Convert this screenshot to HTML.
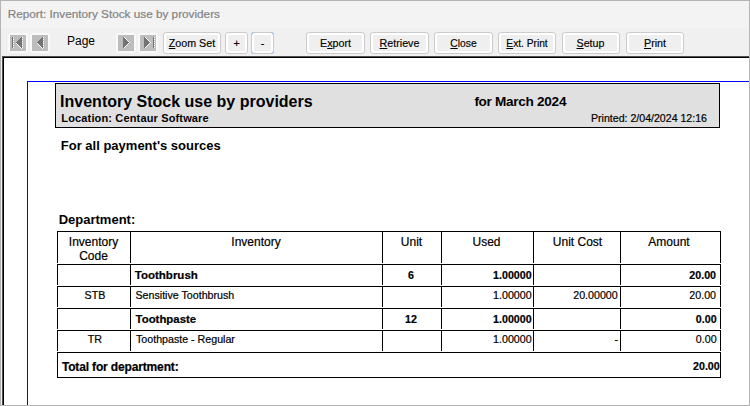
<!DOCTYPE html>
<html><head><meta charset="utf-8"><style>
html,body{margin:0;padding:0}
body{width:750px;height:406px;position:relative;overflow:hidden;background:#f0f0f0;font-family:"Liberation Sans",sans-serif}
.t{position:absolute;white-space:nowrap;-webkit-text-stroke:0.2px currentColor}
.r{position:absolute}
.btn{position:absolute;top:32px;height:20px;border:1px solid #cbcbcb;border-radius:3px;background:#fff}
.btn .in{position:absolute;left:2px;top:2px;right:2px;bottom:2px;background:#efefef;border-radius:1px}
.bl{position:absolute;top:35.9px;height:14px;line-height:14px;font-size:10.7px;text-align:center;color:#000;white-space:nowrap;-webkit-text-stroke:0.15px #000}
.bl u{text-decoration:underline;text-underline-offset:1px}
</style></head><body>
<div class="r" style="left:0px;top:0px;width:750px;height:28px;background:#f3f3f3;"></div>
<div class="r" style="left:0px;top:0px;width:750px;height:1px;background:#b4b4b4;"></div>
<div class="r" style="left:0px;top:0px;width:1px;height:406px;background:#b4b4b4;"></div>
<div class="r" style="left:749px;top:0px;width:1px;height:406px;background:#b4b4b4;"></div>
<div class="r" style="left:0px;top:405px;width:750px;height:1px;background:#b4b4b4;"></div>
<div class="t" style="left:7.7px;top:7.65px;font-size:11.75px;line-height:11.75px;font-weight:400;color:#828282;">Report: Inventory Stock use by providers</div>
<div class="r" style="left:8px;top:33px;width:16px;height:16px;border:2px solid #fafafa;border-radius:4px"></div><svg class="r" style="left:10px;top:35px" width="16" height="16" shape-rendering="crispEdges"><rect width="16" height="16" fill="#bdbdbd"/><rect x="2" y="2" width="1" height="1" fill="#737373"/><rect x="3" y="2" width="1" height="1" fill="#ffffff"/><rect x="2" y="3" width="1" height="1" fill="#737373"/><rect x="2" y="4" width="1" height="1" fill="#737373"/><rect x="3" y="4" width="1" height="1" fill="#ffffff"/><rect x="2" y="5" width="1" height="1" fill="#737373"/><rect x="2" y="6" width="1" height="1" fill="#737373"/><rect x="3" y="6" width="1" height="1" fill="#ffffff"/><rect x="2" y="7" width="1" height="1" fill="#737373"/><rect x="2" y="8" width="1" height="1" fill="#737373"/><rect x="3" y="8" width="1" height="1" fill="#ffffff"/><rect x="2" y="9" width="1" height="1" fill="#737373"/><rect x="2" y="10" width="1" height="1" fill="#737373"/><rect x="3" y="10" width="1" height="1" fill="#ffffff"/><rect x="2" y="11" width="1" height="1" fill="#737373"/><rect x="2" y="12" width="1" height="1" fill="#737373"/><rect x="3" y="12" width="1" height="1" fill="#ffffff"/><rect x="11" y="2" width="1" height="1" fill="#737373"/><rect x="12" y="2" width="1" height="1" fill="#ffffff"/><rect x="10" y="3" width="1" height="1" fill="#737373"/><rect x="11" y="3" width="1" height="1" fill="#737373"/><rect x="9" y="4" width="1" height="1" fill="#737373"/><rect x="10" y="4" width="1" height="1" fill="#737373"/><rect x="11" y="4" width="1" height="1" fill="#737373"/><rect x="12" y="4" width="1" height="1" fill="#ffffff"/><rect x="8" y="5" width="1" height="1" fill="#737373"/><rect x="9" y="5" width="1" height="1" fill="#737373"/><rect x="10" y="5" width="1" height="1" fill="#737373"/><rect x="11" y="5" width="1" height="1" fill="#737373"/><rect x="7" y="6" width="1" height="1" fill="#737373"/><rect x="8" y="6" width="1" height="1" fill="#737373"/><rect x="9" y="6" width="1" height="1" fill="#737373"/><rect x="10" y="6" width="1" height="1" fill="#737373"/><rect x="11" y="6" width="1" height="1" fill="#737373"/><rect x="12" y="6" width="1" height="1" fill="#ffffff"/><rect x="6" y="7" width="1" height="1" fill="#737373"/><rect x="7" y="7" width="1" height="1" fill="#737373"/><rect x="8" y="7" width="1" height="1" fill="#737373"/><rect x="9" y="7" width="1" height="1" fill="#737373"/><rect x="10" y="7" width="1" height="1" fill="#737373"/><rect x="11" y="7" width="1" height="1" fill="#737373"/><rect x="7" y="8" width="1" height="1" fill="#737373"/><rect x="8" y="8" width="1" height="1" fill="#737373"/><rect x="9" y="8" width="1" height="1" fill="#737373"/><rect x="10" y="8" width="1" height="1" fill="#737373"/><rect x="11" y="8" width="1" height="1" fill="#737373"/><rect x="6" y="8" width="1" height="1" fill="#ffffff"/><rect x="12" y="8" width="1" height="1" fill="#ffffff"/><rect x="8" y="9" width="1" height="1" fill="#737373"/><rect x="9" y="9" width="1" height="1" fill="#737373"/><rect x="10" y="9" width="1" height="1" fill="#737373"/><rect x="11" y="9" width="1" height="1" fill="#737373"/><rect x="7" y="9" width="1" height="1" fill="#ffffff"/><rect x="9" y="10" width="1" height="1" fill="#737373"/><rect x="10" y="10" width="1" height="1" fill="#737373"/><rect x="11" y="10" width="1" height="1" fill="#737373"/><rect x="8" y="10" width="1" height="1" fill="#ffffff"/><rect x="12" y="10" width="1" height="1" fill="#ffffff"/><rect x="10" y="11" width="1" height="1" fill="#737373"/><rect x="11" y="11" width="1" height="1" fill="#737373"/><rect x="9" y="11" width="1" height="1" fill="#ffffff"/><rect x="11" y="12" width="1" height="1" fill="#737373"/><rect x="10" y="12" width="1" height="1" fill="#ffffff"/><rect x="12" y="12" width="1" height="1" fill="#ffffff"/><rect x="11" y="13" width="1" height="1" fill="#ffffff"/></svg>
<div class="r" style="left:30px;top:33px;width:16px;height:16px;border:2px solid #fafafa;border-radius:4px"></div><svg class="r" style="left:32px;top:35px" width="16" height="16" shape-rendering="crispEdges"><rect width="16" height="16" fill="#bdbdbd"/><rect x="10" y="2" width="1" height="1" fill="#737373"/><rect x="11" y="2" width="1" height="1" fill="#ffffff"/><rect x="9" y="3" width="1" height="1" fill="#737373"/><rect x="10" y="3" width="1" height="1" fill="#737373"/><rect x="8" y="4" width="1" height="1" fill="#737373"/><rect x="9" y="4" width="1" height="1" fill="#737373"/><rect x="10" y="4" width="1" height="1" fill="#737373"/><rect x="11" y="4" width="1" height="1" fill="#ffffff"/><rect x="7" y="5" width="1" height="1" fill="#737373"/><rect x="8" y="5" width="1" height="1" fill="#737373"/><rect x="9" y="5" width="1" height="1" fill="#737373"/><rect x="10" y="5" width="1" height="1" fill="#737373"/><rect x="6" y="6" width="1" height="1" fill="#737373"/><rect x="7" y="6" width="1" height="1" fill="#737373"/><rect x="8" y="6" width="1" height="1" fill="#737373"/><rect x="9" y="6" width="1" height="1" fill="#737373"/><rect x="10" y="6" width="1" height="1" fill="#737373"/><rect x="11" y="6" width="1" height="1" fill="#ffffff"/><rect x="5" y="7" width="1" height="1" fill="#737373"/><rect x="6" y="7" width="1" height="1" fill="#737373"/><rect x="7" y="7" width="1" height="1" fill="#737373"/><rect x="8" y="7" width="1" height="1" fill="#737373"/><rect x="9" y="7" width="1" height="1" fill="#737373"/><rect x="10" y="7" width="1" height="1" fill="#737373"/><rect x="6" y="8" width="1" height="1" fill="#737373"/><rect x="7" y="8" width="1" height="1" fill="#737373"/><rect x="8" y="8" width="1" height="1" fill="#737373"/><rect x="9" y="8" width="1" height="1" fill="#737373"/><rect x="10" y="8" width="1" height="1" fill="#737373"/><rect x="5" y="8" width="1" height="1" fill="#ffffff"/><rect x="11" y="8" width="1" height="1" fill="#ffffff"/><rect x="7" y="9" width="1" height="1" fill="#737373"/><rect x="8" y="9" width="1" height="1" fill="#737373"/><rect x="9" y="9" width="1" height="1" fill="#737373"/><rect x="10" y="9" width="1" height="1" fill="#737373"/><rect x="6" y="9" width="1" height="1" fill="#ffffff"/><rect x="8" y="10" width="1" height="1" fill="#737373"/><rect x="9" y="10" width="1" height="1" fill="#737373"/><rect x="10" y="10" width="1" height="1" fill="#737373"/><rect x="7" y="10" width="1" height="1" fill="#ffffff"/><rect x="11" y="10" width="1" height="1" fill="#ffffff"/><rect x="9" y="11" width="1" height="1" fill="#737373"/><rect x="10" y="11" width="1" height="1" fill="#737373"/><rect x="8" y="11" width="1" height="1" fill="#ffffff"/><rect x="10" y="12" width="1" height="1" fill="#737373"/><rect x="9" y="12" width="1" height="1" fill="#ffffff"/><rect x="11" y="12" width="1" height="1" fill="#ffffff"/><rect x="10" y="13" width="1" height="1" fill="#ffffff"/></svg>
<div class="r" style="left:116px;top:33px;width:16px;height:16px;border:2px solid #fafafa;border-radius:4px"></div><svg class="r" style="left:118px;top:35px" width="16" height="16" shape-rendering="crispEdges"><rect width="16" height="16" fill="#bdbdbd"/><rect x="5" y="2" width="1" height="1" fill="#737373"/><rect x="6" y="2" width="1" height="1" fill="#ffffff"/><rect x="5" y="3" width="1" height="1" fill="#737373"/><rect x="6" y="3" width="1" height="1" fill="#737373"/><rect x="7" y="3" width="1" height="1" fill="#ffffff"/><rect x="5" y="4" width="1" height="1" fill="#737373"/><rect x="6" y="4" width="1" height="1" fill="#737373"/><rect x="7" y="4" width="1" height="1" fill="#737373"/><rect x="8" y="4" width="1" height="1" fill="#ffffff"/><rect x="5" y="5" width="1" height="1" fill="#737373"/><rect x="6" y="5" width="1" height="1" fill="#737373"/><rect x="7" y="5" width="1" height="1" fill="#737373"/><rect x="8" y="5" width="1" height="1" fill="#737373"/><rect x="9" y="5" width="1" height="1" fill="#ffffff"/><rect x="5" y="6" width="1" height="1" fill="#737373"/><rect x="6" y="6" width="1" height="1" fill="#737373"/><rect x="7" y="6" width="1" height="1" fill="#737373"/><rect x="8" y="6" width="1" height="1" fill="#737373"/><rect x="9" y="6" width="1" height="1" fill="#737373"/><rect x="10" y="6" width="1" height="1" fill="#ffffff"/><rect x="5" y="7" width="1" height="1" fill="#737373"/><rect x="6" y="7" width="1" height="1" fill="#737373"/><rect x="7" y="7" width="1" height="1" fill="#737373"/><rect x="8" y="7" width="1" height="1" fill="#737373"/><rect x="9" y="7" width="1" height="1" fill="#737373"/><rect x="10" y="7" width="1" height="1" fill="#737373"/><rect x="11" y="7" width="1" height="1" fill="#ffffff"/><rect x="5" y="8" width="1" height="1" fill="#737373"/><rect x="6" y="8" width="1" height="1" fill="#737373"/><rect x="7" y="8" width="1" height="1" fill="#737373"/><rect x="8" y="8" width="1" height="1" fill="#737373"/><rect x="9" y="8" width="1" height="1" fill="#737373"/><rect x="10" y="8" width="1" height="1" fill="#ffffff"/><rect x="5" y="9" width="1" height="1" fill="#737373"/><rect x="6" y="9" width="1" height="1" fill="#737373"/><rect x="7" y="9" width="1" height="1" fill="#737373"/><rect x="8" y="9" width="1" height="1" fill="#737373"/><rect x="9" y="9" width="1" height="1" fill="#ffffff"/><rect x="5" y="10" width="1" height="1" fill="#737373"/><rect x="6" y="10" width="1" height="1" fill="#737373"/><rect x="7" y="10" width="1" height="1" fill="#737373"/><rect x="8" y="10" width="1" height="1" fill="#ffffff"/><rect x="5" y="11" width="1" height="1" fill="#737373"/><rect x="6" y="11" width="1" height="1" fill="#737373"/><rect x="7" y="11" width="1" height="1" fill="#ffffff"/><rect x="5" y="12" width="1" height="1" fill="#737373"/><rect x="6" y="12" width="1" height="1" fill="#ffffff"/></svg>
<div class="r" style="left:138px;top:33px;width:16px;height:16px;border:2px solid #fafafa;border-radius:4px"></div><svg class="r" style="left:140px;top:35px" width="16" height="16" shape-rendering="crispEdges"><rect width="16" height="16" fill="#bdbdbd"/><rect x="4" y="2" width="1" height="1" fill="#737373"/><rect x="5" y="2" width="1" height="1" fill="#ffffff"/><rect x="13" y="2" width="1" height="1" fill="#737373"/><rect x="14" y="2" width="1" height="1" fill="#ffffff"/><rect x="4" y="3" width="1" height="1" fill="#737373"/><rect x="5" y="3" width="1" height="1" fill="#737373"/><rect x="6" y="3" width="1" height="1" fill="#ffffff"/><rect x="13" y="3" width="1" height="1" fill="#737373"/><rect x="4" y="4" width="1" height="1" fill="#737373"/><rect x="5" y="4" width="1" height="1" fill="#737373"/><rect x="6" y="4" width="1" height="1" fill="#737373"/><rect x="7" y="4" width="1" height="1" fill="#ffffff"/><rect x="13" y="4" width="1" height="1" fill="#737373"/><rect x="14" y="4" width="1" height="1" fill="#ffffff"/><rect x="4" y="5" width="1" height="1" fill="#737373"/><rect x="5" y="5" width="1" height="1" fill="#737373"/><rect x="6" y="5" width="1" height="1" fill="#737373"/><rect x="7" y="5" width="1" height="1" fill="#737373"/><rect x="8" y="5" width="1" height="1" fill="#ffffff"/><rect x="13" y="5" width="1" height="1" fill="#737373"/><rect x="4" y="6" width="1" height="1" fill="#737373"/><rect x="5" y="6" width="1" height="1" fill="#737373"/><rect x="6" y="6" width="1" height="1" fill="#737373"/><rect x="7" y="6" width="1" height="1" fill="#737373"/><rect x="8" y="6" width="1" height="1" fill="#737373"/><rect x="9" y="6" width="1" height="1" fill="#ffffff"/><rect x="13" y="6" width="1" height="1" fill="#737373"/><rect x="14" y="6" width="1" height="1" fill="#ffffff"/><rect x="4" y="7" width="1" height="1" fill="#737373"/><rect x="5" y="7" width="1" height="1" fill="#737373"/><rect x="6" y="7" width="1" height="1" fill="#737373"/><rect x="7" y="7" width="1" height="1" fill="#737373"/><rect x="8" y="7" width="1" height="1" fill="#737373"/><rect x="9" y="7" width="1" height="1" fill="#737373"/><rect x="10" y="7" width="1" height="1" fill="#ffffff"/><rect x="13" y="7" width="1" height="1" fill="#737373"/><rect x="4" y="8" width="1" height="1" fill="#737373"/><rect x="5" y="8" width="1" height="1" fill="#737373"/><rect x="6" y="8" width="1" height="1" fill="#737373"/><rect x="7" y="8" width="1" height="1" fill="#737373"/><rect x="8" y="8" width="1" height="1" fill="#737373"/><rect x="9" y="8" width="1" height="1" fill="#ffffff"/><rect x="13" y="8" width="1" height="1" fill="#737373"/><rect x="14" y="8" width="1" height="1" fill="#ffffff"/><rect x="4" y="9" width="1" height="1" fill="#737373"/><rect x="5" y="9" width="1" height="1" fill="#737373"/><rect x="6" y="9" width="1" height="1" fill="#737373"/><rect x="7" y="9" width="1" height="1" fill="#737373"/><rect x="8" y="9" width="1" height="1" fill="#ffffff"/><rect x="13" y="9" width="1" height="1" fill="#737373"/><rect x="4" y="10" width="1" height="1" fill="#737373"/><rect x="5" y="10" width="1" height="1" fill="#737373"/><rect x="6" y="10" width="1" height="1" fill="#737373"/><rect x="7" y="10" width="1" height="1" fill="#ffffff"/><rect x="13" y="10" width="1" height="1" fill="#737373"/><rect x="14" y="10" width="1" height="1" fill="#ffffff"/><rect x="4" y="11" width="1" height="1" fill="#737373"/><rect x="5" y="11" width="1" height="1" fill="#737373"/><rect x="6" y="11" width="1" height="1" fill="#ffffff"/><rect x="13" y="11" width="1" height="1" fill="#737373"/><rect x="4" y="12" width="1" height="1" fill="#737373"/><rect x="5" y="12" width="1" height="1" fill="#ffffff"/><rect x="13" y="12" width="1" height="1" fill="#737373"/><rect x="14" y="12" width="1" height="1" fill="#ffffff"/></svg>
<div class="t" style="left:67px;top:34.64px;font-size:12px;line-height:12px;font-weight:400;color:#000;-webkit-text-stroke:0;">Page</div>
<div class="btn" style="left:163px;width:56px;border-color:#cbcbcb"><div class="in"></div></div>
<div class="bl" style="left:163px;width:58px;"><u>Z</u>oom Set</div>
<div class="btn" style="left:225px;width:21px;border-color:#cbcbcb"><div class="in"></div></div>
<div class="bl" style="left:225px;width:23px;">+</div>
<div class="btn" style="left:251px;width:21px;border-color:#cbcbcb"><div class="in"></div></div>
<div class="bl" style="left:251px;width:23px;">-</div>
<div class="btn" style="left:306px;width:57px;border-color:#cbcbcb"><div class="in"></div></div>
<div class="bl" style="left:306px;width:59px;">E<u>x</u>port</div>
<div class="btn" style="left:370px;width:57px;border-color:#cbcbcb"><div class="in"></div></div>
<div class="bl" style="left:370px;width:59px;"><u>R</u>etrieve</div>
<div class="btn" style="left:434px;width:57px;border-color:#cbcbcb"><div class="in"></div></div>
<div class="bl" style="left:434px;width:59px;font-size:10.3px;top:36.6px;"><u>C</u>lose</div>
<div class="btn" style="left:498px;width:56px;border-color:#cbcbcb"><div class="in"></div></div>
<div class="bl" style="left:498px;width:58px;font-size:10.2px;top:36.6px;"><u>E</u>xt. Print</div>
<div class="btn" style="left:562px;width:56px;border-color:#cbcbcb"><div class="in"></div></div>
<div class="bl" style="left:562px;width:58px;text-indent:-1px;"><u>S</u>etup</div>
<div class="btn" style="left:626px;width:56px;border-color:#cbcbcb"><div class="in"></div></div>
<div class="bl" style="left:626px;width:58px;"><u>P</u>rint</div>
<div class="r" style="left:251px;top:32px;width:2px;height:2px;border-top:1px solid #a6c6e6;border-left:1px solid #a6c6e6;border-top-left-radius:3px"></div>
<div class="r" style="left:271px;top:32px;width:2px;height:2px;border-top:1px solid #a6c6e6;border-right:1px solid #a6c6e6;border-top-right-radius:3px"></div>
<div class="r" style="left:251px;top:51px;width:2px;height:2px;border-bottom:1px solid #a6c6e6;border-left:1px solid #a6c6e6;border-bottom-left-radius:3px"></div>
<div class="r" style="left:271px;top:51px;width:2px;height:2px;border-bottom:1px solid #a6c6e6;border-right:1px solid #a6c6e6;border-bottom-right-radius:3px"></div>
<div class="r" style="left:2px;top:56px;width:747px;height:1px;background:#505050;"></div>
<div class="r" style="left:2px;top:56px;width:1px;height:349px;background:#505050;"></div>
<div class="r" style="left:3px;top:57px;width:746px;height:1px;background:#000;"></div>
<div class="r" style="left:3px;top:57px;width:1px;height:348px;background:#000;"></div>
<div class="r" style="left:4px;top:58px;width:745px;height:347px;background:#fff;"></div>
<div class="r" style="left:27px;top:81px;width:722px;height:1px;background:#0000ff;"></div>
<div class="r" style="left:27px;top:81px;width:1px;height:324px;background:#0000ff;"></div>
<div class="r" style="left:55px;top:83px;width:665px;height:45px;background:#e0e0e0;border:1px solid #000;box-sizing:border-box"></div>
<div class="t" style="left:60.1px;top:93.76px;font-size:16px;line-height:16px;font-weight:700;color:#000;-webkit-text-stroke:0;">Inventory Stock use by providers</div>
<div class="t" style="left:474.4px;top:95.19px;font-size:13.6px;line-height:13.6px;font-weight:700;color:#000;letter-spacing:-0.3px;-webkit-text-stroke:0;">for March 2024</div>
<div class="t" style="left:61.3px;top:112.99px;font-size:11px;line-height:11px;font-weight:700;color:#000;letter-spacing:0.15px;-webkit-text-stroke:0;">Location: Centaur Software</div>
<div class="t" style="right:43px;top:112.63px;font-size:10.6px;line-height:10.6px;font-weight:400;color:#000;">Printed: 2/04/2024 12:16</div>
<div class="t" style="left:60.8px;top:138.70px;font-size:13px;line-height:13px;font-weight:700;color:#000;-webkit-text-stroke:0;">For all payment's sources</div>
<div class="t" style="left:58.7px;top:212.70px;font-size:13px;line-height:13px;font-weight:700;color:#000;-webkit-text-stroke:0;">Department:</div>
<div class="r" style="left:57px;top:231px;width:664px;height:1px;background:#000;"></div><div class="r" style="left:57px;top:231px;width:1px;height:32px;background:#000;"></div><div class="r" style="left:130px;top:231px;width:1px;height:32px;background:#000;"></div><div class="r" style="left:382px;top:231px;width:1px;height:32px;background:#000;"></div><div class="r" style="left:441px;top:231px;width:1px;height:32px;background:#000;"></div><div class="r" style="left:533px;top:231px;width:1px;height:32px;background:#000;"></div><div class="r" style="left:620px;top:231px;width:1px;height:32px;background:#000;"></div><div class="r" style="left:720px;top:231px;width:1px;height:32px;background:#000;"></div>
<div class="r" style="left:57px;top:264px;width:664px;height:1px;background:#000;"></div><div class="r" style="left:57px;top:264px;width:1px;height:21px;background:#000;"></div><div class="r" style="left:130px;top:264px;width:1px;height:21px;background:#000;"></div><div class="r" style="left:382px;top:264px;width:1px;height:21px;background:#000;"></div><div class="r" style="left:441px;top:264px;width:1px;height:21px;background:#000;"></div><div class="r" style="left:533px;top:264px;width:1px;height:21px;background:#000;"></div><div class="r" style="left:620px;top:264px;width:1px;height:21px;background:#000;"></div><div class="r" style="left:720px;top:264px;width:1px;height:21px;background:#000;"></div>
<div class="r" style="left:57px;top:286px;width:664px;height:1px;background:#000;"></div><div class="r" style="left:57px;top:286px;width:1px;height:21px;background:#000;"></div><div class="r" style="left:130px;top:286px;width:1px;height:21px;background:#000;"></div><div class="r" style="left:382px;top:286px;width:1px;height:21px;background:#000;"></div><div class="r" style="left:441px;top:286px;width:1px;height:21px;background:#000;"></div><div class="r" style="left:533px;top:286px;width:1px;height:21px;background:#000;"></div><div class="r" style="left:620px;top:286px;width:1px;height:21px;background:#000;"></div><div class="r" style="left:720px;top:286px;width:1px;height:21px;background:#000;"></div>
<div class="r" style="left:57px;top:308px;width:664px;height:1px;background:#000;"></div><div class="r" style="left:57px;top:308px;width:1px;height:21px;background:#000;"></div><div class="r" style="left:130px;top:308px;width:1px;height:21px;background:#000;"></div><div class="r" style="left:382px;top:308px;width:1px;height:21px;background:#000;"></div><div class="r" style="left:441px;top:308px;width:1px;height:21px;background:#000;"></div><div class="r" style="left:533px;top:308px;width:1px;height:21px;background:#000;"></div><div class="r" style="left:620px;top:308px;width:1px;height:21px;background:#000;"></div><div class="r" style="left:720px;top:308px;width:1px;height:21px;background:#000;"></div>
<div class="r" style="left:57px;top:330px;width:664px;height:1px;background:#000;"></div><div class="r" style="left:57px;top:330px;width:1px;height:21px;background:#000;"></div><div class="r" style="left:130px;top:330px;width:1px;height:21px;background:#000;"></div><div class="r" style="left:382px;top:330px;width:1px;height:21px;background:#000;"></div><div class="r" style="left:441px;top:330px;width:1px;height:21px;background:#000;"></div><div class="r" style="left:533px;top:330px;width:1px;height:21px;background:#000;"></div><div class="r" style="left:620px;top:330px;width:1px;height:21px;background:#000;"></div><div class="r" style="left:720px;top:330px;width:1px;height:21px;background:#000;"></div>
<div class="r" style="left:57px;top:352px;width:664px;height:1px;background:#000;"></div><div class="r" style="left:57px;top:352px;width:1px;height:26px;background:#000;"></div><div class="r" style="left:720px;top:352px;width:1px;height:26px;background:#000;"></div><div class="r" style="left:57px;top:377px;width:664px;height:1px;background:#000;"></div>
<div class="t" style="left:-106.5px;width:400px;text-align:center;top:235.84px;font-size:12px;line-height:12px;font-weight:400;color:#000;">Inventory</div>
<div class="t" style="left:-106.5px;width:400px;text-align:center;top:249.84px;font-size:12px;line-height:12px;font-weight:400;color:#000;">Code</div>
<div class="t" style="left:56px;width:400px;text-align:center;top:235.84px;font-size:12px;line-height:12px;font-weight:400;color:#000;">Inventory</div>
<div class="t" style="left:211.5px;width:400px;text-align:center;top:235.54px;font-size:12px;line-height:12px;font-weight:400;color:#000;">Unit</div>
<div class="t" style="left:286.5px;width:400px;text-align:center;top:235.54px;font-size:12px;line-height:12px;font-weight:400;color:#000;">Used</div>
<div class="t" style="left:377.5px;width:400px;text-align:center;top:235.54px;font-size:12px;line-height:12px;font-weight:400;color:#000;">Unit Cost</div>
<div class="t" style="left:469px;width:400px;text-align:center;top:235.54px;font-size:12px;line-height:12px;font-weight:400;color:#000;">Amount</div>
<div class="t" style="left:134.8px;top:269.87px;font-size:11.5px;line-height:11.5px;font-weight:700;color:#000;">Toothbrush</div>
<div class="t" style="left:211px;width:400px;text-align:center;top:269.87px;font-size:10.67px;line-height:10.67px;font-weight:700;color:#000;">6</div>
<div class="t" style="right:218.39999999999998px;top:269.87px;font-size:10.67px;line-height:10.67px;font-weight:700;color:#000;">1.00000</div>
<div class="t" style="right:34px;top:269.87px;font-size:10.67px;line-height:10.67px;font-weight:700;color:#000;">20.00</div>
<div class="t" style="left:-105.1px;width:400px;text-align:center;top:289.57px;font-size:10.67px;line-height:10.67px;font-weight:400;color:#000;">STB</div>
<div class="t" style="left:135.5px;top:289.67px;font-size:10.67px;line-height:10.67px;font-weight:400;color:#000;">Sensitive Toothbrush</div>
<div class="t" style="right:218.39999999999998px;top:289.87px;font-size:10.67px;line-height:10.67px;font-weight:400;color:#000;">1.00000</div>
<div class="t" style="right:132.29999999999995px;top:289.87px;font-size:10.67px;line-height:10.67px;font-weight:400;color:#000;">20.00000</div>
<div class="t" style="right:34px;top:289.87px;font-size:10.67px;line-height:10.67px;font-weight:400;color:#000;">20.00</div>
<div class="t" style="left:135.6px;top:313.85px;font-size:11.4px;line-height:11.4px;font-weight:700;color:#000;">Toothpaste</div>
<div class="t" style="left:211px;width:400px;text-align:center;top:313.77px;font-size:10.67px;line-height:10.67px;font-weight:700;color:#000;">12</div>
<div class="t" style="right:218.39999999999998px;top:313.77px;font-size:10.67px;line-height:10.67px;font-weight:700;color:#000;">1.00000</div>
<div class="t" style="right:33.39999999999998px;top:313.77px;font-size:10.67px;line-height:10.67px;font-weight:700;color:#000;">0.00</div>
<div class="t" style="left:-105.2px;width:400px;text-align:center;top:333.57px;font-size:10.67px;line-height:10.67px;font-weight:400;color:#000;">TR</div>
<div class="t" style="left:136px;top:333.57px;font-size:10.67px;line-height:10.67px;font-weight:400;color:#000;">Toothpaste - Regular</div>
<div class="t" style="right:218.39999999999998px;top:333.77px;font-size:10.67px;line-height:10.67px;font-weight:400;color:#000;">1.00000</div>
<div class="t" style="right:131.89999999999998px;top:333.77px;font-size:10.67px;line-height:10.67px;font-weight:400;color:#000;">-</div>
<div class="t" style="right:33.39999999999998px;top:333.77px;font-size:10.67px;line-height:10.67px;font-weight:400;color:#000;">0.00</div>
<div class="t" style="left:61.9px;top:360.64px;font-size:12px;line-height:12px;font-weight:700;color:#000;letter-spacing:-0.15px;">Total for department:</div>
<div class="t" style="right:30.299999999999955px;top:360.77px;font-size:10.67px;line-height:10.67px;font-weight:700;color:#000;">20.00</div>
</body></html>
